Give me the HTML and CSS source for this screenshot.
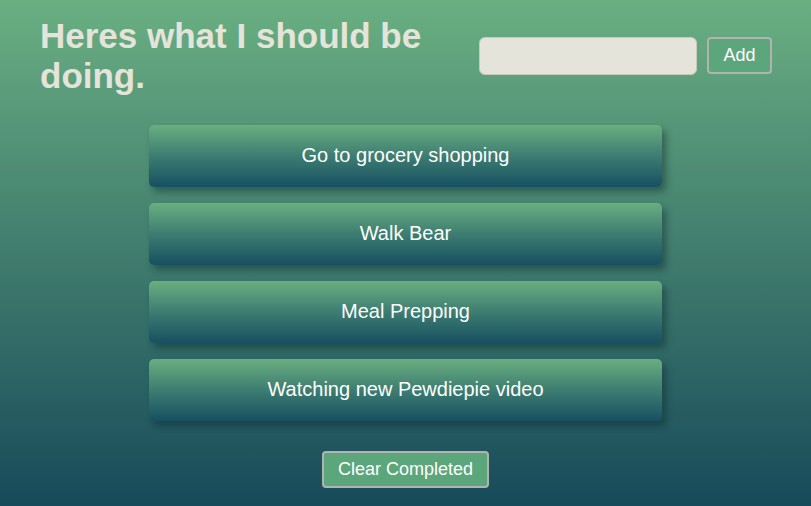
FILE: index.html
```html
<!DOCTYPE html>
<html lang="en">
<head>
<meta charset="utf-8">
<title>Todo</title>
<link rel="stylesheet" href="styles.css">
</head>
<body>
<div class="page">
  <header class="header">
    <h1 class="title">Heres what I should be doing.</h1>
    <form class="add-form">
      <input class="add-input" type="text">
      <button class="add-btn" type="button">Add</button>
    </form>
  </header>
  <ul class="list">
    <li class="item">Go to grocery shopping</li>
    <li class="item">Walk Bear</li>
    <li class="item">Meal Prepping</li>
    <li class="item">Watching new Pewdiepie video</li>
  </ul>
  <div class="footer">
    <button class="clear-btn" type="button">Clear Completed</button>
  </div>
</div>
</body>
</html>
```
FILE: styles.css
```css
html, body {
  margin: 0;
  padding: 0;
  height: 100%;
}
body {
  background: linear-gradient(to bottom, #6aaf82 0%, #174a5a 100%);
  font-family: "Liberation Sans", Arial, sans-serif;
}
.page {
  min-height: 100%;
  box-sizing: border-box;
}
.header {
  display: flex;
  justify-content: space-between;
  align-items: flex-start;
  padding: 16px 39px 0 40px;
}
.title {
  margin: 0;
  width: 420px;
  font-size: 35px;
  line-height: 40px;
  font-weight: bold;
  color: #e5e4da;
}
.add-form {
  display: flex;
  gap: 10px;
  margin-top: 21px;
}
.add-input {
  width: 218px;
  height: 38px;
  box-sizing: border-box;
  background: #e5e4da;
  border: 1px solid #c9c9bd;
  border-radius: 6px;
  outline: none;
}
.add-btn, .clear-btn {
  background: #5ca67c;
  color: #ffffff;
  border: 2px solid #b0b3ae;
  border-radius: 4px;
  font-family: "Liberation Sans", Arial, sans-serif;
  font-size: 18px;
  box-sizing: border-box;
}
.add-btn {
  width: 65px;
  height: 37px;
}
.list {
  list-style: none;
  margin: 29px 0 0 0;
  padding: 0;
  display: flex;
  flex-direction: column;
  align-items: center;
  gap: 16px;
}
.item {
  width: 513px;
  height: 62px;
  box-sizing: border-box;
  padding-bottom: 2px;
  display: flex;
  align-items: center;
  justify-content: center;
  border-radius: 5px;
  background: linear-gradient(to bottom, #6aae80 0%, #3d7d72 50%, #175060 100%);
  box-shadow: 4px 5px 7px rgba(10, 40, 45, 0.45);
  color: #ffffff;
  font-size: 20px;
}
.footer {
  display: flex;
  justify-content: center;
  margin-top: 30px;
}
.clear-btn {
  width: 167px;
  height: 37px;
}
```
